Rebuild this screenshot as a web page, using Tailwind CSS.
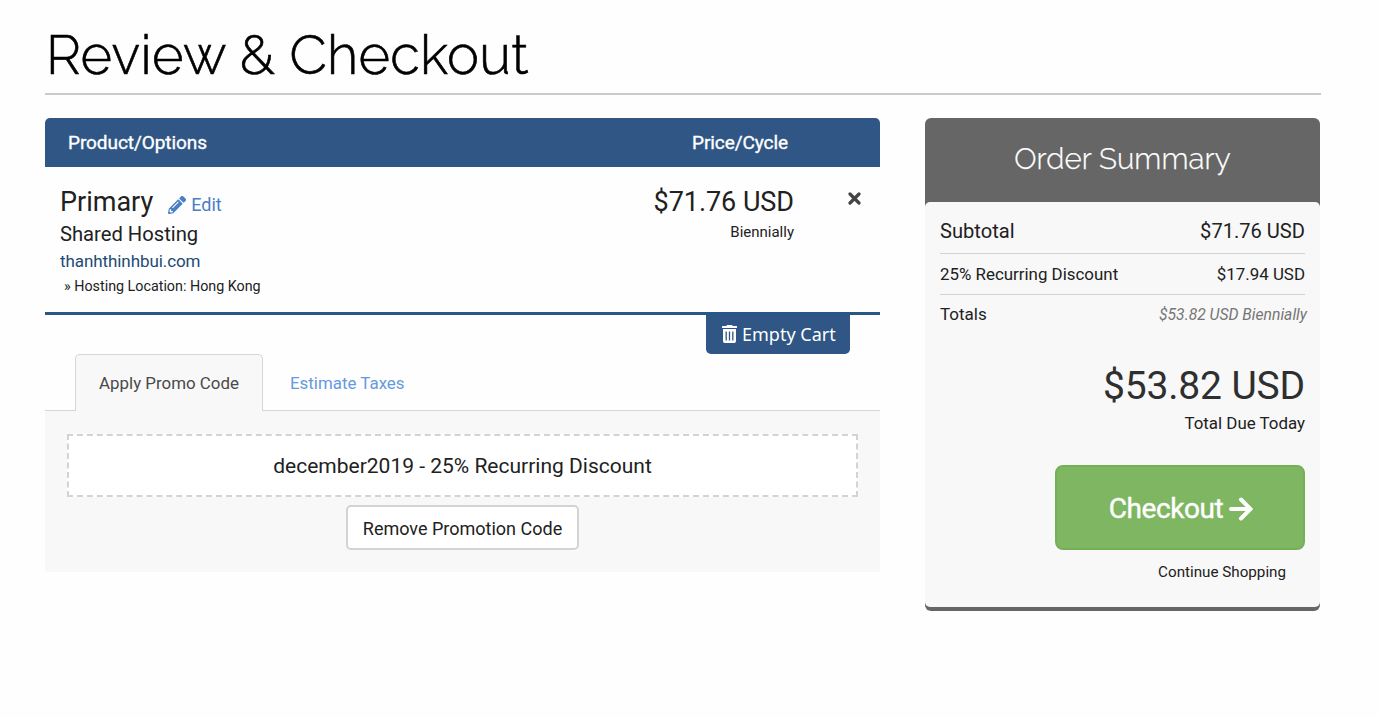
<!DOCTYPE html>
<html lang="en">
<head>
<meta charset="utf-8">
<title>Review &amp; Checkout</title>
<script src="https://cdn.jsdelivr.net/npm/@tailwindcss/browser@4"></script>
</head>
<body class="h-[717px] overflow-hidden bg-[#fefefe] pl-[45px] pr-[59px] font-['Roboto',sans-serif] text-[#212121]">
<header class="h-[95px] border-b-2 border-[#cbcbcb] pt-[18px]">
  <h1 class="w-max whitespace-nowrap pl-[1px] font-['Raleway','Lato',sans-serif] text-[54px] leading-[74px] font-light tracking-[0.32px] text-black [-webkit-text-stroke:0.6px_black]">Review &amp; Checkout</h1>
</header>
<main class="flex items-start gap-[45px] pt-[23px]">
  <section class="w-[835px]">
    <div class="flex h-[49px] items-center justify-between rounded-t-[5px] bg-[#2f5685] pt-[1px] pr-[92px] pl-[23px] text-[19px] tracking-[-0.07px] text-white [-webkit-text-stroke:0.35px_white]">
      <span>Product/Options</span><span>Price/Cycle</span>
    </div>
    <div class="flex h-[148px] justify-between border-b-[3px] border-[#265786] pl-[15px]">
      <div class="pt-[18px] whitespace-nowrap">
        <div class="flex h-[33px] items-center gap-[15px]">
          <span class="pt-[2px] text-[27px] leading-[33px]">Primary</span>
          <a class="flex items-center gap-[5px] pt-[6px] text-[18px] leading-[28px] text-[#4a7fc4]">
            <svg class="h-[18px] w-[18px]" viewBox="0 0 512 512" fill="currentColor"><path d="M497.9 142.1l-46.1 46.1c-4.7 4.7-12.3 4.7-17 0l-111-111c-4.7-4.7-4.7-12.3 0-17l46.1-46.1c18.700-18.700 49.100-18.700 67.900 0l60.100 60.100c18.800 18.700 18.800 49.100 0 67.900zM284.200 99.800L21.600 362.400.4 483.900c-2.900 16.400 11.400 30.600 27.800 27.800l121.500-21.300 262.600-262.600c4.700-4.700 4.700-12.300 0-17l-111-111c-4.800-4.700-12.400-4.700-17.100 0zM124.100 339.900c-5.500-5.500-5.500-14.300 0-19.800l154-154c5.500-5.500 14.300-5.500 19.800 0s5.500 14.300 0 19.800l-154 154c-5.500 5.500-14.300 5.500-19.800 0zM88 424h48v36.300l-64.500 11.300-31.100-31.100L51.700 376H88v48z"/></svg>
            <span>Edit</span>
          </a>
        </div>
        <div class="h-[31px] text-[20.2px] leading-[32px]">Shared Hosting</div>
        <div class="h-[24px] text-[17px] leading-[24px] tracking-[-0.08px] text-[#1c4a75]">thanhthinhbui.com</div>
        <div class="pl-[4px] text-[14.3px] leading-[27px]">» Hosting Location: Hong Kong</div>
      </div>
      <div class="flex">
        <div class="w-[200px] pt-[19px] text-right">
          <div class="text-[27px] leading-[33px] tracking-[-0.05px]">$71.76 USD</div>
          <div class="text-[15px] leading-[26px]">Biennially</div>
        </div>
        <div class="w-[86px] pt-[25px] pl-[54px]">
          <svg class="h-[13px] w-[13px]" viewBox="0 0 13 13" stroke="#444" stroke-width="3.200" stroke-linecap="round"><path d="M2 2l9 9M11 2l-9 9"/></svg>
        </div>
      </div>
    </div>
    <div class="flex h-[96px] border-b border-[#d6d6d6] pl-[30px]">
      <div class="z-10 mt-[39px] h-[57px] w-[188px] rounded-t-[5px] border border-b-0 border-[#d6d6d6] bg-[#f8f8f8] pt-[14px] text-center text-[16.9px] leading-[28px] text-[#494949]">Apply Promo Code</div>
      <div class="ml-[27px] pt-[54px] text-[16.9px] leading-[29px] text-[#659ade]">Estimate Taxes</div>
      <div class="mr-[30px] ml-auto flex h-[39px] w-[144px] items-center gap-[5px] rounded-b-[5px] bg-[#2f5685] pb-[1px] pl-[16px] font-['Noto_Sans',sans-serif] text-[18px] leading-[28px] text-white">
        <svg class="h-[18px] w-[15px] shrink-0" viewBox="0 0 15 18"><path fill="#fff" d="M5 0h5l.7 1H14.500q.5 0 .5.500V3H0V1.500Q0 1 .5 1H4.300zM1 4h13v12.300q0 1.700-1.700 1.700H2.700Q1 18 1 16.300z"/><path d="M4.200 6.500v9M7.500 6.500v9M10.800 6.500v9" stroke="#2f5685" stroke-width="1.300"/></svg>
        <span class="-mt-[1px] whitespace-nowrap">Empty Cart</span>
      </div>
    </div>
    <div class="flex h-[161px] flex-col items-center bg-[#f8f8f8] pt-[23px]">
      <div class="flex h-[63px] w-[791px] items-center justify-center border-2 border-dashed border-[#d3d3d3] bg-white pt-[3px] text-[21px]">december2019 - 25% Recurring Discount</div>
      <button class="mt-[8px] h-[45px] w-[233px] rounded-[5px] border-2 border-[#d3d3d3] bg-white pt-[1px] text-[18px] whitespace-nowrap">Remove Promotion Code</button>
    </div>
  </section>
  <aside class="h-[493px] w-[395px] rounded-[6px] bg-[#666666]">
    <h2 class="h-[84px] pt-[1px] text-center font-['Raleway','Lato',sans-serif] text-[29.500px] leading-[80px] font-light tracking-[0.12px] text-white [-webkit-text-stroke:0.25px_white]">Order Summary</h2>
    <div class="h-[405px] rounded-[5px] bg-[#f8f8f8] px-[15px] text-right">
      <div class="flex h-[52px] items-center justify-between border-b border-[#d2d2d2] pt-[8px] text-[20.1px]"><span>Subtotal</span><span>$71.76 USD</span></div>
      <div class="flex h-[41px] items-center justify-between border-b border-[#d2d2d2] pt-[1px] text-[16.9px]"><span>25% Recurring Discount</span><span>$17.94 USD</span></div>
      <div class="flex h-[40px] items-center justify-between text-[17px]"><span>Totals</span><span class="-mt-[1px] -mr-[2px] text-[15.7px] text-[#757575] italic">$53.82 USD Biennially</span></div>
      <div class="pt-[27px] text-[39px] leading-[48px] tracking-[-0.15px] text-[#2f2f2f]">$53.82 USD</div>
      <div class="text-[16.9px] leading-[27px]">Total Due Today</div>
      <button class="mt-[28px] ml-auto flex h-[85px] w-[250px] items-center justify-center gap-[6px] rounded-[8px] border-2 border-[#74b155] bg-[#7eb662] pt-[2px] pl-[2px] text-[28px] text-white">
        <span class="tracking-[-0.4px] [-webkit-text-stroke:0.4px_white]">Checkout</span>
        <svg class="h-[24px] w-[24px]" viewBox="0 0 24 24" fill="none" stroke="#fff" stroke-width="4" stroke-linecap="round"><path d="M2 12h19M12 2.500l9.500 9.500-9.500 9.500"/></svg>
      </button>
      <div class="pt-[8px] pr-[19px] text-[15.200px] leading-[28px]">Continue Shopping</div>
    </div>
  </aside>
</main>
</body>
</html>
